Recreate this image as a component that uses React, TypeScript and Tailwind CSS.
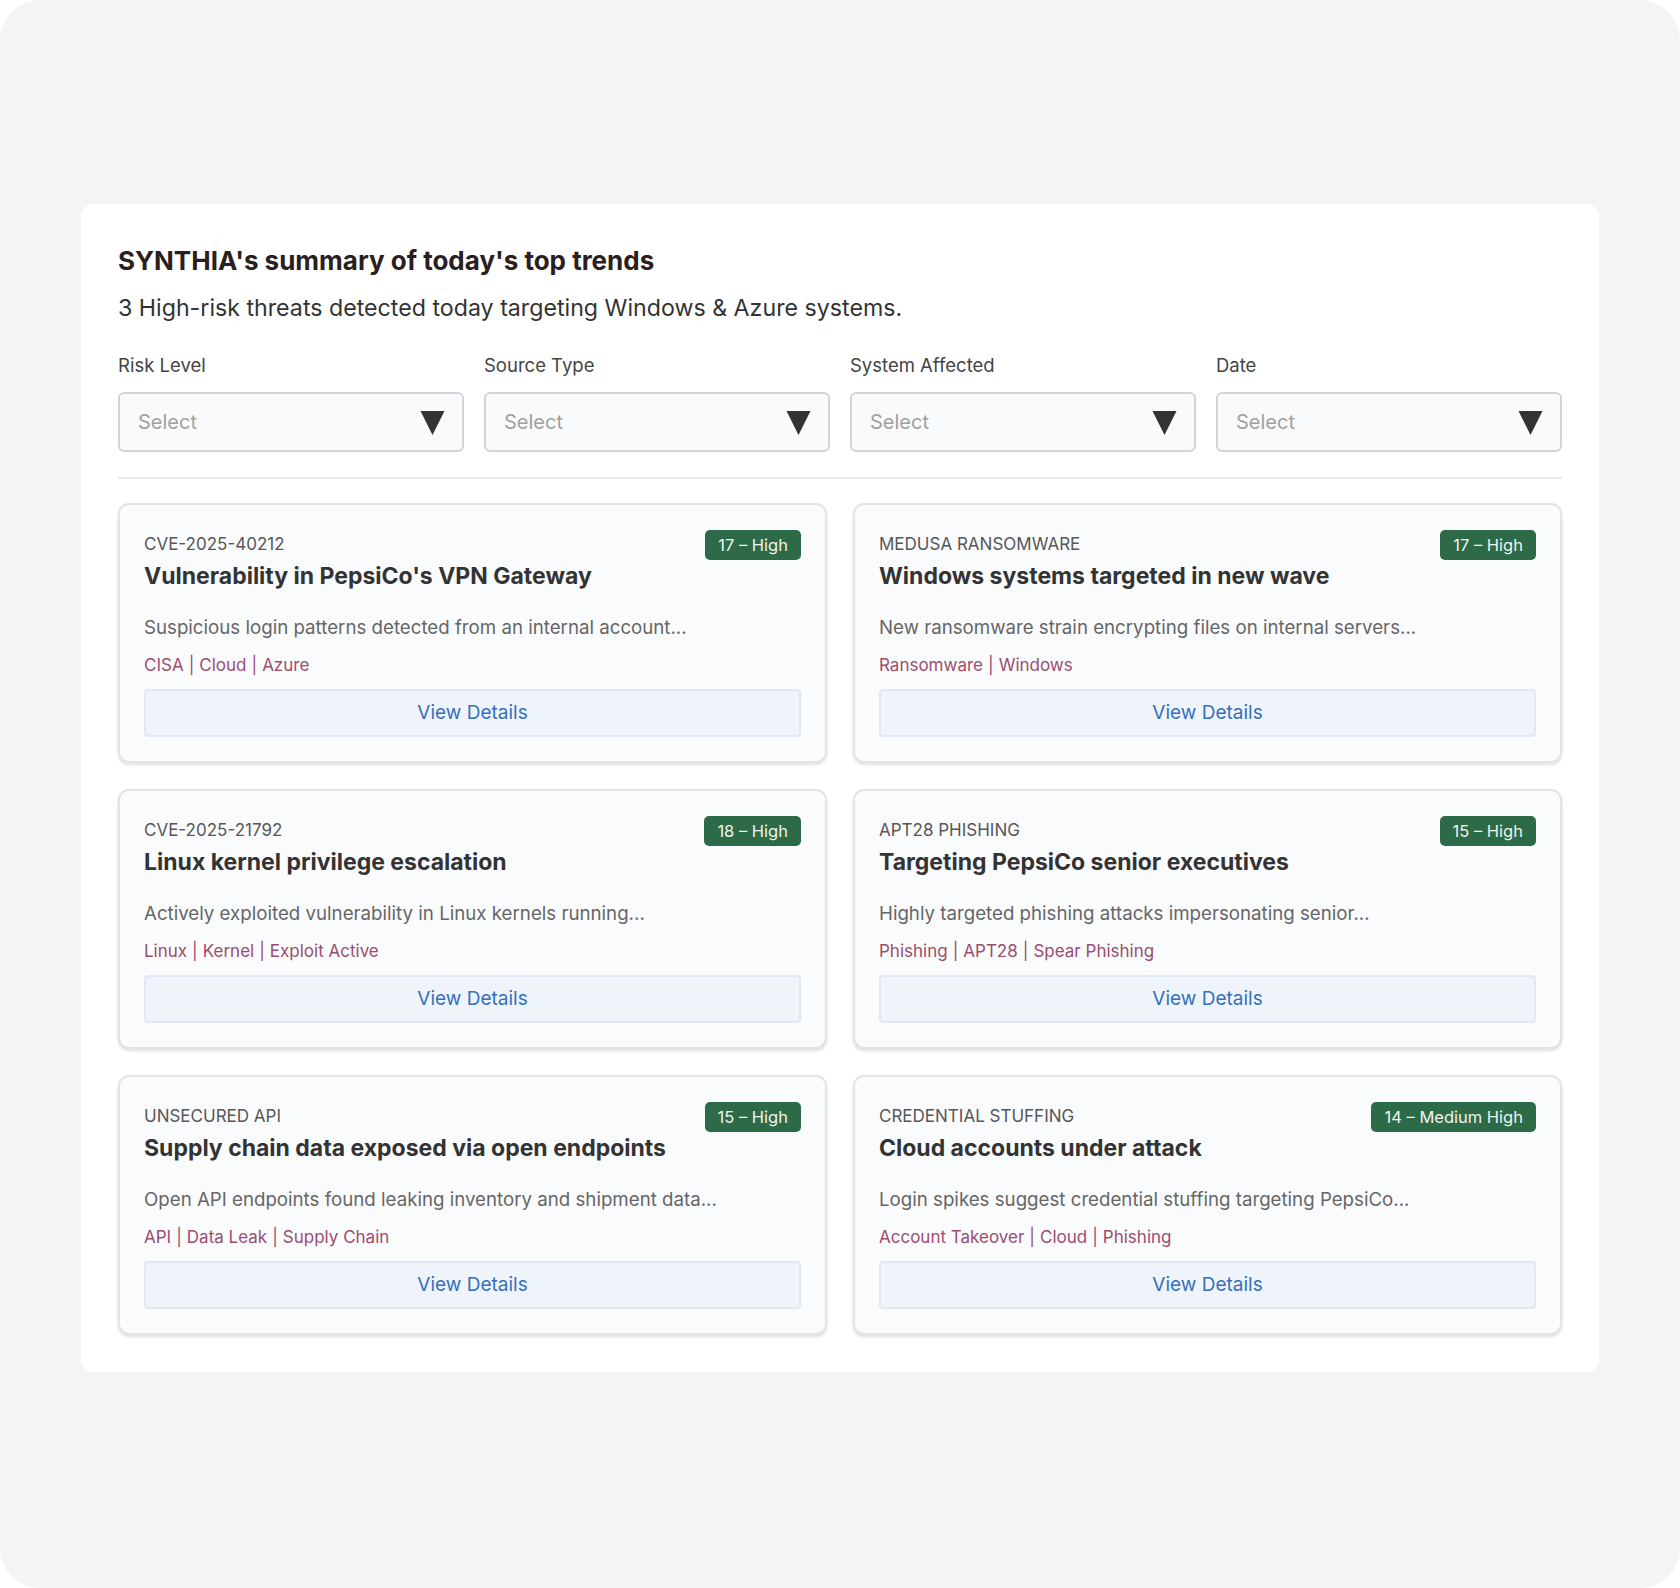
type Threat = {
  id: number
  source: string
  title: string
  summary: string
  tags: string[]
  score: string
}

const threats: Threat[] = [
  {
    id: 1,
    source: "CVE-2025-40212",
    title: "Vulnerability in PepsiCo's VPN Gateway",
    summary: "Suspicious login patterns detected from an internal account...",
    tags: ["CISA", "Cloud", "Azure"],
    score: "17 – High",
  },
  {
    id: 2,
    source: "MEDUSA RANSOMWARE",
    title: "Windows systems targeted in new wave",
    summary: "New ransomware strain encrypting files on internal servers...",
    tags: ["Ransomware", "Windows"],
    score: "17 – High",
  },
  {
    id: 3,
    source: "CVE-2025-21792",
    title: "Linux kernel privilege escalation",
    summary: "Actively exploited vulnerability in Linux kernels running...",
    tags: ["Linux", "Kernel", "Exploit Active"],
    score: "18 – High",
  },
  {
    id: 4,
    source: "APT28 PHISHING",
    title: "Targeting PepsiCo senior executives",
    summary: "Highly targeted phishing attacks impersonating senior...",
    tags: ["Phishing", "APT28", "Spear Phishing"],
    score: "15 – High",
  },
  {
    id: 5,
    source: "UNSECURED API",
    title: "Supply chain data exposed via open endpoints",
    summary: "Open API endpoints found leaking inventory and shipment data...",
    tags: ["API", "Data Leak", "Supply Chain"],
    score: "15 – High",
  },
  {
    id: 6,
    source: "CREDENTIAL STUFFING",
    title: "Cloud accounts under attack",
    summary: "Login spikes suggest credential stuffing targeting PepsiCo...",
    tags: ["Account Takeover", "Cloud", "Phishing"],
    score: "14 – Medium High",
  },
]

const filters = ["Risk Level", "Source Type", "System Affected", "Date"]

function Caret() {
  return (
    <svg width="25" height="25" viewBox="0 0 25 25" className="flex-shrink-0">
      <path d="M0.5 1 L24.5 1 L12.5 25 Z" fill="#333333" />
    </svg>
  )
}

function ThreatCard({ t }: { t: Threat }) {
  return (
    <div className="flex flex-col rounded-[11px] border-2 border-[#e3e4e7] bg-[#fafbfd] px-[24px] pt-[25px] pb-[24px] shadow-[0_2px_3px_rgba(0,0,0,0.12)]">
      <div className="flex items-start justify-between gap-4">
        <div className="min-w-0 pt-[2px]">
          <div className="text-[17px] leading-[24px] text-[#575757]">{t.source}</div>
          <h3 className="mt-[5px] text-[23px] font-bold leading-[30px] text-[#333333]">{t.title}</h3>
        </div>
        <span className="flex-shrink-0 rounded-[5px] bg-[#2d6a47] px-[13px] text-[16.5px] leading-[30px] text-[#eef4ef]">
          {t.score}
        </span>
      </div>
      <p className="mt-[24px] text-[18.7px] leading-[26px] text-[#666666]">{t.summary}</p>
      <div className="mt-[12px] text-[17px] leading-[24px] text-[#9c4d6e]">
        {t.tags.map((tag, i) => (
          <span key={tag}>
            {i > 0 && <span className="mx-[5px]">|</span>}
            {tag}
          </span>
        ))}
      </div>
      <button className="mt-[12px] h-[48px] w-full rounded-[4px] border-2 border-[#dfe8f4] bg-[#eff4fb] text-[19px] text-[#3470bd]">
        View Details
      </button>
    </div>
  )
}

export default function App() {
  return (
    <div className="bg-white" style={{ fontFamily: "Inter, 'Noto Sans', sans-serif" }}>
      <div className="h-[1588px] rounded-[40px] bg-[#f4f4f4] pt-[204px]">
        <div className="mx-auto w-[1518px] rounded-[13px] bg-white px-[37px] pt-[40px] pb-[37px]">
          <h2 className="text-[26px] font-bold leading-[34px] text-[#2b1e20]">SYNTHIA's summary of today's top trends</h2>
          <p className="mt-[15px] text-[23.2px] leading-[30px] text-[#333333]">
            3 High-risk threats detected today targeting Windows &amp; Azure systems.
          </p>

          <div className="mt-[30px] grid grid-cols-4 gap-[20px]">
            {filters.map((f) => (
              <div key={f}>
                <div className="text-[18.5px] leading-[24px] text-[#444444]">{f}</div>
                <div className="mt-[15px] flex h-[60px] items-center justify-between rounded-[6px] border-2 border-[#d3d4d7] bg-[#f9fafc] pl-[18px] pr-[17px]">
                  <span className="text-[20px] text-[#a0a0a0]">Select</span>
                  <Caret />
                </div>
              </div>
            ))}
          </div>

          <div className="mt-[25px] h-[2px] bg-[#e9e9eb]" />

          <div className="mt-[24px] grid grid-cols-2 gap-[26px]">
            {threats.map((t) => (
              <ThreatCard key={t.id} t={t} />
            ))}
          </div>
        </div>
      </div>
    </div>
  )
}
